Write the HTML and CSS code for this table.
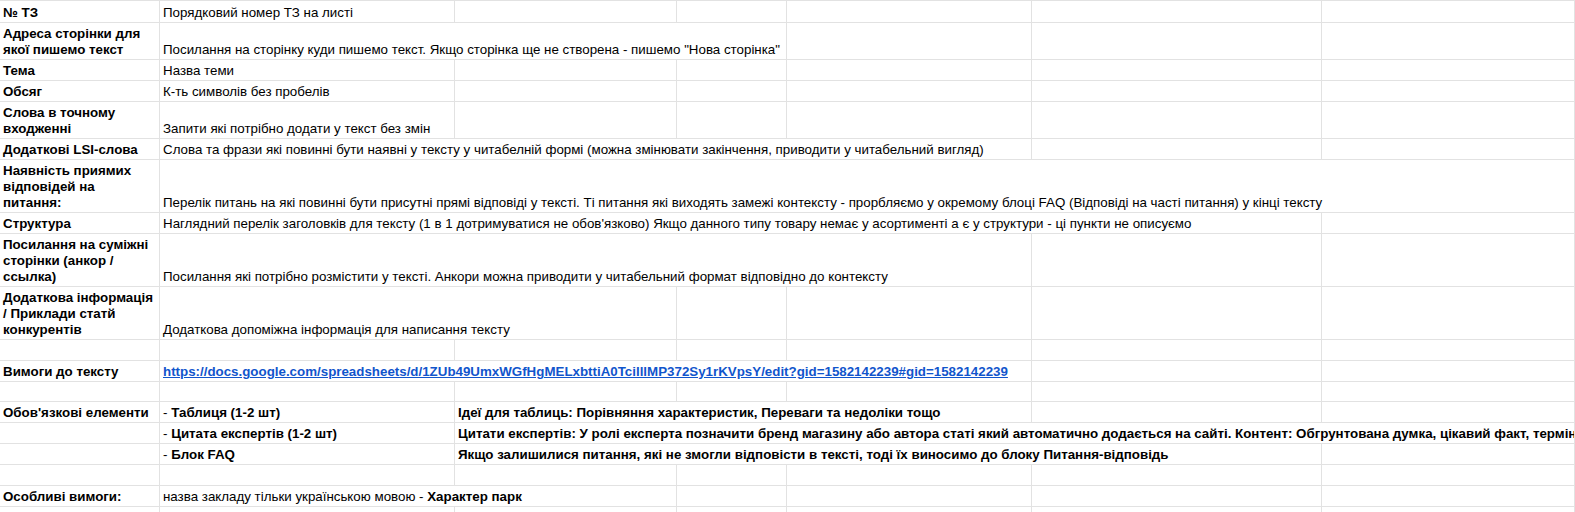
FILE: index.html
```html
<!DOCTYPE html>
<html lang="uk">
<head>
<meta charset="utf-8">
<title>ТЗ</title>
<link rel="stylesheet" href="styles.css">
</head>
<body>
<div class="sheet">
  <div class="row h22">
    <div class="c b">№ ТЗ</div>
    <div class="c">Порядковий номер ТЗ на листі</div>
    <div class="c"></div><div class="c"></div><div class="c"></div><div class="c"></div><div class="c"></div>
  </div>
  <div class="row h37">
    <div class="c b wrap">Адреса сторінки для якої пишемо текст</div>
    <div class="c s3">Посилання на сторінку куди пишемо текст. Якщо сторінка ще не створена - пишемо "Нова сторінка"</div>
    <div class="c"></div><div class="c"></div><div class="c"></div>
  </div>
  <div class="row h21">
    <div class="c b">Тема</div>
    <div class="c">Назва теми</div>
    <div class="c"></div><div class="c"></div><div class="c"></div><div class="c"></div><div class="c"></div>
  </div>
  <div class="row h21">
    <div class="c b">Обсяг</div>
    <div class="c">К-ть символів без пробелів</div>
    <div class="c"></div><div class="c"></div><div class="c"></div><div class="c"></div><div class="c"></div>
  </div>
  <div class="row h37">
    <div class="c b wrap">Слова в точному входженні</div>
    <div class="c">Запити які потрібно додати у текст без змін</div>
    <div class="c"></div><div class="c"></div><div class="c"></div><div class="c"></div><div class="c"></div>
  </div>
  <div class="row h21">
    <div class="c b">Додаткові LSI-слова</div>
    <div class="c s4">Слова та фрази які повинні бути наявні у тексту у читабелній формі (можна змінювати закінчення, приводити у читабельний вигляд)</div>
    <div class="c"></div><div class="c"></div>
  </div>
  <div class="row h53">
    <div class="c b wrap">Наявність приямих відповідей на питання:</div>
    <div class="c s6">Перелік питань на які повинні бути присутні прямі відповіді у тексті. Ті питання які виходять замежі контексту - прорбляємо у окремому блоці FAQ (Відповіді на часті питання) у кінці тексту</div>
  </div>
  <div class="row h21">
    <div class="c b">Структура</div>
    <div class="c s5">Наглядний перелік заголовків для тексту (1 в 1 дотримуватися не обов'язково) Якщо данного типу товару немає у асортименті а є у структури - ці пункти не описуємо</div>
    <div class="c"></div>
  </div>
  <div class="row h53">
    <div class="c b wrap">Посилання на суміжні сторінки (анкор / ссылка)</div>
    <div class="c s4">Посилання які потрібно розмістити у тексті. Анкори можна приводити у читабельний формат відповідно до контексту</div>
    <div class="c"></div><div class="c"></div>
  </div>
  <div class="row h53">
    <div class="c b wrap">Додаткова інформація / Приклади статй конкурентів</div>
    <div class="c s2">Додаткова допоміжна інформація для написання тексту</div>
    <div class="c"></div><div class="c"></div><div class="c"></div><div class="c"></div>
  </div>
  <div class="row h21">
    <div class="c"></div><div class="c"></div><div class="c"></div><div class="c"></div><div class="c"></div><div class="c"></div><div class="c"></div>
  </div>
  <div class="row h21">
    <div class="c b">Вимоги до тексту</div>
    <div class="c s4"><a class="link" href="#">https://docs.google.com/spreadsheets/d/1ZUb49UmxWGfHgMELxbttiA0TcilllMP372Sy1rKVpsY/edit?gid=1582142239#gid=1582142239</a></div>
    <div class="c"></div><div class="c"></div>
  </div>
  <div class="row h20">
    <div class="c"></div><div class="c"></div><div class="c"></div><div class="c"></div><div class="c"></div><div class="c"></div><div class="c"></div>
  </div>
  <div class="row h21">
    <div class="c b">Обов'язкові елементи</div>
    <div class="c">- <b>Таблиця (1-2 шт)</b></div>
    <div class="c s3 b">Ідеї для таблиць: Порівняння характеристик, Переваги та недоліки тощо</div>
    <div class="c"></div><div class="c"></div>
  </div>
  <div class="row h21">
    <div class="c"></div>
    <div class="c">- <b>Цитата експертів (1-2 шт)</b></div>
    <div class="c s5 b">Цитати експертів: У ролі експерта позначити бренд магазину або автора статі який автоматично додається на сайті. Контент: Обгрунтована думка, цікавий факт, термін</div>
  </div>
  <div class="row h21">
    <div class="c"></div>
    <div class="c">- <b>Блок FAQ</b></div>
    <div class="c s4 b">Якщо залишилися питання, які не змогли відповісти в тексті, тоді їх виносимо до блоку Питання-відповідь</div>
    <div class="c"></div>
  </div>
  <div class="row h21">
    <div class="c"></div><div class="c"></div><div class="c"></div><div class="c"></div><div class="c"></div><div class="c"></div><div class="c"></div>
  </div>
  <div class="row h21">
    <div class="c b">Особливі вимоги:</div>
    <div class="c s2">назва закладу тільки українською мовою - <b>Характер парк</b></div>
    <div class="c"></div><div class="c"></div><div class="c"></div><div class="c"></div>
  </div>
  <div class="row h21">
    <div class="c"></div><div class="c"></div><div class="c"></div><div class="c"></div><div class="c"></div><div class="c"></div><div class="c"></div>
  </div>
</div>
</body>
</html>
```

FILE: styles.css
```css
html, body {
  margin: 0;
  padding: 0;
  background: #ffffff;
  overflow: hidden;
}

body {
  width: 1575px;
  height: 512px;
  font-family: "Liberation Sans", Arial, sans-serif;
  font-size: 13.33px;
  color: #000000;
}

.sheet {
  border-top: 1px solid #e2e2e2;
  width: 1575px;
}

.row {
  display: grid;
  grid-template-columns: 160px 295px 222px 110px 245px 290px 1fr;
}

.h20 { height: 20px; }
.h21 { height: 21px; }
.h22 { height: 22px; }
.h37 { height: 37px; }
.h53 { height: 53px; }

.c {
  box-sizing: border-box;
  border-right: 1px solid #e2e2e2;
  border-bottom: 1px solid #e2e2e2;
  padding: 0 3px 1px 3px;
  line-height: 16px;
  display: flex;
  align-items: flex-end;
  white-space: pre;
  overflow: hidden;
  min-width: 0;
}

.c.wrap {
  white-space: normal;
}

.b, .c b {
  font-weight: bold;
}

.s2 { grid-column: span 2; }
.s3 { grid-column: span 3; }
.s4 { grid-column: span 4; }
.s5 { grid-column: span 5; }
.s6 { grid-column: span 6; }

.link {
  color: #1155cc;
  text-decoration: underline;
  font-weight: bold;
}
```
